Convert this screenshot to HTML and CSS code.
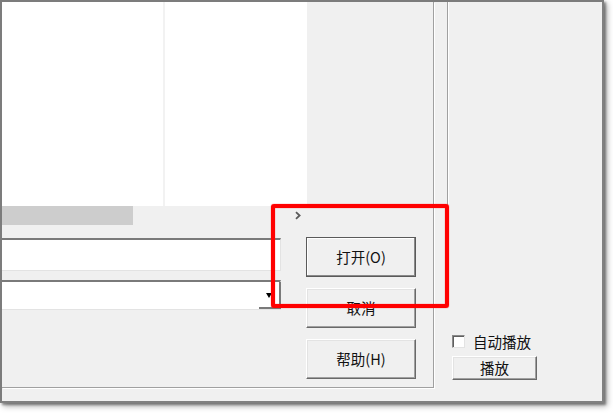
FILE: index.html
```html
<!DOCTYPE html>
<html lang="zh-CN">
<head>
<meta charset="utf-8">
<title>打开</title>
<link rel="stylesheet" href="styles.css">
</head>
<body>
<div class="window">
  <div class="left-box">
    <div class="top-row">
      <div class="list-pane">
        <div class="list">
          <div class="list-col"></div>
        </div>
        <div class="hscroll">
          <div class="thumb"></div>
          <div class="track"></div>
          <div class="arrow">
            <svg width="8" height="9" viewBox="0 0 8 9"><path d="M2 1.2 L5.6 4.5 L2 7.8" fill="none" stroke="#5a5a5a" stroke-width="1.8"/></svg>
          </div>
        </div>
      </div>
    </div>
    <div class="bottom-row">
      <div class="fields">
        <div class="field input"></div>
        <div class="field combo">
          <div class="combo-btn"><span class="tri"></span></div>
        </div>
      </div>
      <div class="buttons">
        <div class="btn default">打开(O)</div>
        <div class="btn">取消</div>
        <div class="btn">帮助(H)</div>
      </div>
    </div>
  </div>
  <div class="right-col">
    <div class="rail"></div>
    <div class="check-row">
      <span class="checkbox"></span>
      <span class="check-label">自动播放</span>
    </div>
    <div class="btn small">播放</div>
  </div>
</div>
<div class="highlight"></div>
</body>
</html>
```

FILE: styles.css
```css
html, body {
  margin: 0;
  padding: 0;
}
body {
  width: 613px;
  height: 413px;
  overflow: hidden;
  background: #ffffff;
  position: relative;
  font-family: "Noto Sans CJK SC", "Noto Sans", sans-serif;
  font-size: 14.5px;
  color: #111;
}
.window {
  box-sizing: border-box;
  width: 604px;
  height: 403px;
  background: #f0f0f0;
  border-top: 2px solid #7c7c7c;
  border-left: 2px solid #7c7c7c;
  border-right: 2px solid #808080;
  border-bottom: 2px solid #808080;
  box-shadow: 2px 2px 2px rgba(0, 0, 0, 0.35), 3px 3px 6px rgba(0, 0, 0, 0.35);
  display: flex;
  align-items: flex-start;
}
.left-box {
  box-sizing: border-box;
  width: 432px;
  height: 386px;
  border-right: 1px solid #a0a0a0;
  border-bottom: 1px solid #a0a0a0;
  box-shadow: 1px 1px 0 #ffffff;
  display: flex;
  flex-direction: column;
}
.top-row {
  display: flex;
}
.list-pane {
  width: 305px;
  display: flex;
  flex-direction: column;
}
.list {
  height: 204px;
  background: #ffffff;
  display: flex;
}
.list-col {
  width: 161px;
  border-right: 2px solid #f2f2f2;
}
.hscroll {
  height: 19px;
  display: flex;
  background: #f0f0f0;
}
.thumb {
  width: 131px;
  background: #cdcdcd;
}
.track {
  flex: 1;
}
.arrow {
  width: 19px;
  display: flex;
  align-items: center;
  justify-content: center;
}
.bottom-row {
  display: flex;
  margin-top: 12px;
}
.fields {
  width: 279px;
  display: flex;
  flex-direction: column;
}
.field {
  box-sizing: border-box;
  background: #ffffff;
  border-top: 2px solid #7a7a7a;
  border-right: 1px solid #e3e3e3;
  border-bottom: 1px solid #e3e3e3;
}
.input {
  margin-top: 1px;
  height: 33px;
}
.combo {
  margin-top: 9px;
  height: 30px;
  display: flex;
  justify-content: flex-end;
}
.combo-btn {
  box-sizing: border-box;
  width: 22px;
  height: 27px;
  margin-right: -1px;
  border-right: 2px solid #7a7a7a;
  border-bottom: 2px solid #7a7a7a;
  display: flex;
  align-items: center;
  justify-content: center;
  padding-top: 2px;
}
.tri {
  width: 0;
  height: 0;
  border-left: 3px solid transparent;
  border-right: 3px solid transparent;
  border-top: 5px solid #000;
}
.buttons {
  margin-left: 25px;
  width: 110px;
  display: flex;
  flex-direction: column;
  gap: 11px;
}
.btn {
  box-sizing: border-box;
  height: 40px;
  background: #f0f0f0;
  border: 1px solid;
  border-color: #ffffff #696969 #696969 #ffffff;
  box-shadow: inset -1px -1px 0 #a0a0a0, inset 1px 1px 0 #e3e3e3;
  display: flex;
  align-items: center;
  justify-content: center;
  line-height: 1;
  color: #111;
}
.btn.default {
  border: 1px solid #5a5a5a;
  box-shadow: inset -1px -1px 0 #8a8a8a, inset 1px 1px 0 #ffffff;
}
.right-col {
  flex: 1;
  display: flex;
  flex-direction: column;
  padding-left: 18px;
}
.rail {
  margin-left: -5px;
  width: 0;
  height: 298px;
  border-left: 1px solid #a0a0a0;
  box-shadow: 1px 0 0 #ffffff;
}
.check-row {
  margin-top: 34px;
  height: 15px;
  display: flex;
  align-items: center;
  gap: 8px;
}
.checkbox {
  box-sizing: border-box;
  width: 13px;
  height: 13px;
  background: #ffffff;
  border: 1px solid;
  border-color: #8a8a8a #e3e3e3 #e3e3e3 #8a8a8a;
  box-shadow: inset 1px 1px 0 #5f5f5f;
}
.check-label {
  line-height: 15px;
}
.btn.small {
  margin-top: 7px;
  width: 85px;
  height: 24px;
}
.highlight {
  position: absolute;
  left: 271px;
  top: 204px;
  width: 178px;
  height: 104px;
  box-sizing: border-box;
  border: 4px solid #ff0000;
  border-radius: 3px;
  box-shadow: 0 0 1px #ff0000, inset 0 0 1px #ff0000;
}
```
